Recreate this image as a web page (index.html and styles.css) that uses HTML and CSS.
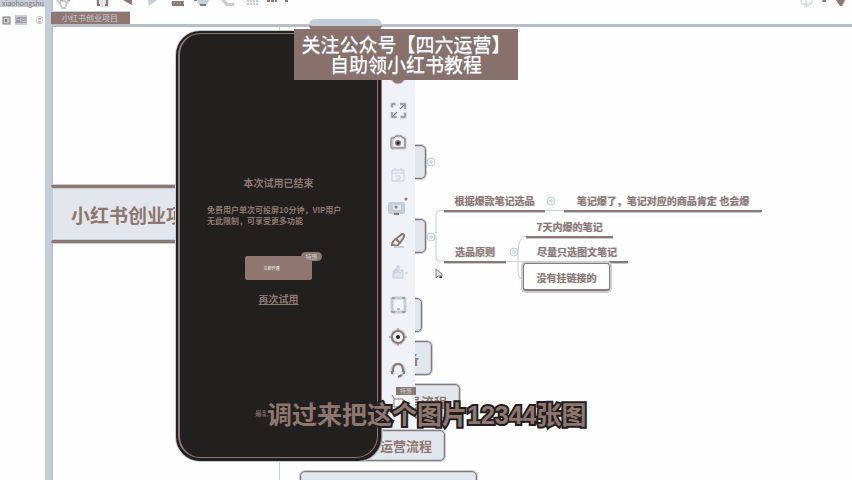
FILE: index.html
```html
<!DOCTYPE html>
<html lang="zh-CN">
<head>
<meta charset="utf-8">
<title>小红书创业项目</title>
<link rel="stylesheet" href="styles.css">
</head>
<body>
<div class="app">
  <aside class="sidebar">
    <div class="account">xiaohongshu</div>
    <div class="side-tools">
      <svg width="9" height="9" viewBox="0 0 9 9"><rect x="1" y="1" width="7" height="7" fill="#c3cedb" stroke="#8f776f"/><path d="M3 3h2v3H3z" fill="#8f776f"/></svg>
      <span>返回</span>
      <svg class="side-end" width="7" height="8" viewBox="0 0 7 8"><rect x=".5" y=".5" width="6" height="7" rx="2" fill="#fff" stroke="#c3cedb"/><path d="M2 3h3M2 6h3" stroke="#8f776f"/></svg>
    </div>
  </aside>
  <div class="divider"></div>
  <main class="workspace">
    <header class="topbar">
      <div class="tools">
        <button class="tool first" aria-label="主页"><svg viewBox="0 0 25 10"><path d="M6 0l2 3 4-3 4 3 3-3M9 3l2 5h3l2-5" fill="none" stroke="#c3cedb" stroke-width="2"/><path d="M9 0h3M16 0h3" stroke="#8f776f"/></svg></button>
        <button class="tool" aria-label="保存"><svg viewBox="0 0 25 10"><path d="M7 0v6h11V0" fill="#e1e7ed" stroke="#c3cedb"/><path d="M8 0v5h2M17 0v5h-2" fill="none" stroke="#8f776f" stroke-width="2"/></svg></button>
        <button class="tool" aria-label="撤销"><svg viewBox="0 0 25 10"><path d="M8 0h9v5l-4-2z" fill="#8f776f"/></svg></button>
        <button class="tool" aria-label="重做"><svg viewBox="0 0 25 10"><path d="M8 0h9l-4 3-4 3z" fill="#c3cedb"/></svg></button>
        <button class="tool" aria-label="主题"><svg viewBox="0 0 25 10"><path d="M7 1h12v5H7z" fill="#8f776f"/><path d="M6 3h14" stroke="#c3cedb" stroke-dasharray="1 2"/></svg></button>
        <button class="tool" aria-label="关系"><svg viewBox="0 0 25 10"><path d="M7 0h12l-2 5H9z" fill="#c3cedb"/><path d="M10 5h6M4 0h3" stroke="#8f776f" stroke-width="2"/></svg></button>
        <button class="tool" aria-label="概要"><svg viewBox="0 0 25 10"><path d="M6 0h4l3 3h6v3h-8z" fill="#c3cedb"/></svg></button>
        <button class="tool" aria-label="外框"><svg viewBox="0 0 25 10"><path d="M7 1h12M7 4h12" stroke="#c3cedb" stroke-width="2" stroke-dasharray="2 1"/></svg></button>
        <button class="tool" aria-label="更多"><svg viewBox="0 0 25 10"><path d="M2 1h10M20 1h3" stroke="#8f776f" stroke-width="2" stroke-dasharray="3 1"/></svg></button>
        <button class="tool push" aria-label="语音"><svg viewBox="0 0 25 10"><path d="M8 0v2q0 2 3 2h6q2 0 2-2V0M11 6h5M13 0v6" fill="none" stroke="#c3cedb" stroke-width="1"/></svg></button>
        <button class="tool last" aria-label="标记"><svg viewBox="0 0 34 10"><path d="M4 0h4v2H5z" fill="#8f776f"/><path d="M18 0h9l-3 6h-2z" fill="#8f776f"/></svg></button>
      </div>
      <div class="tabs"><a class="tab" href="#map">小红书创业项目</a></div>
    </header>

    <section class="map" id="map">
      <svg class="links" viewBox="0 0 852 480" width="852" height="480">
        <g fill="none" stroke="#c3cedb">
          <path d="M279.500 27v453M426 237h10M444 210.500h-4q-4 0-4 4V257q0 4 4 4h4M545 210.500h19M506 261.500h20M526 236.500h-2q-6 2-6 18v18q0 5 4 7"/>
          <g fill="#f3f6f9"><circle cx="431" cy="162" r="4"/><circle cx="431" cy="237" r="4"/><circle cx="551" cy="201" r="4"/><circle cx="514" cy="252" r="4"/></g>
          <path d="M429 162h4M431 160v4M429 237h4M431 235v4M549 201h4M551 199v4M512 252h4M514 250v4"/>
        </g>
      </svg>
      <div class="node root">小红书创业项目</div>
      <div class="node n1"></div>
      <div class="node n2"></div>
      <div class="node n3"></div>
      <div class="node n4">准备</div>
      <div class="node n5">起号流程</div>
      <div class="node n6">运营流程</div>
      <div class="node n7"></div>
      <div class="leaf l1">根据爆款笔记选品</div>
      <div class="leaf l2">笔记爆了，笔记对应的商品肯定 也会爆</div>
      <div class="leaf l3">选品原则</div>
      <div class="leaf l4">7天内爆的笔记</div>
      <div class="leaf l5">尽量只选图文笔记</div>
      <div class="leaf selected">没有挂链接的</div>
      <svg class="cursor" width="8" height="12" viewBox="0 0 8 12"><path d="M1 1v9l2-2h4V6z" fill="#e1e7ed" stroke="#8f776f"/><path d="M4 9l3-1v2H5z" fill="#22201f"/></svg>
    </section>
  </main>

  <div class="hint"></div>
  <section class="mirror">
    <div class="phone">
      <div class="screen">
        <h1>本次试用已结束</h1>
        <p>免费用户单次可投屏10分钟，VIP用户<br>无此限制，可享受更多功能</p>
        <div class="buy"><button class="vip">立即开通</button><span class="badge">特惠</span></div>
        <a class="retry" href="#retry">再次试用</a>
        <span class="foot">最新</span>
      </div>
    </div>
    <nav class="rail">
      <button aria-label="置顶"><svg viewBox="0 0 20 20"><circle cx="10" cy="10" r="7" fill="#8f776f" stroke="#c3cedb"/></svg></button>
      <button aria-label="全屏"><svg viewBox="0 0 20 20"><path d="M4 8V4h4M12 4h5v5M17 12v5h-5M8 17H4v-5M12 9l4-4M5 16l4-4" fill="none" stroke="#c3cedb" stroke-width="3"/><path d="M4 7V4h3M12 4h5v5M17 13v4h-4M9 17H4v-5M12 9l4-4M5 16l4-4" fill="none" stroke="#8f776f" stroke-width="1"/></svg></button>
      <button aria-label="截图"><svg viewBox="0 0 20 20"><path d="M4 6h2l2-2h5l2 2h2v10H4z" fill="#f3f6f9" stroke="#c3cedb" stroke-width="3" stroke-linejoin="round"/><path d="M4 6h2l2-2h5l2 2h1q1 0 1 1v8q0 1-1 1H4q-1 0-1-1V7q0-1 1-1z" fill="none" stroke="#8f776f"/><circle cx="10" cy="11" r="3" fill="#8f776f"/><circle cx="10" cy="11" r="1.500" fill="#22201f"/></svg></button>
      <button aria-label="录屏"><svg viewBox="0 0 20 20"><path d="M4 5h12v11H4zM4 8h12M7 3v3M13 3v3M8 11h4v3H8" fill="none" stroke="#c3cedb"/></svg></button>
      <button aria-label="投屏"><svg viewBox="0 0 20 20"><rect x="0" y="5" width="17" height="12" rx="2" fill="#c3cedb"/><path d="M5 8h8v5H5z" fill="#e1e7ed"/><circle cx="8" cy="10" r="1.500" fill="#8f776f"/><circle cx="18" cy="2" r="1.500" fill="#8f776f"/><path d="M6 17h5" stroke="#8f776f" stroke-width="2"/></svg></button>
      <button aria-label="画笔"><svg viewBox="0 0 20 20"><path d="M4 15q0-4 5-7l5-4q3 0 2 3l-4 6q-3 4-6 2z" fill="#e1e7ed" stroke="#8f776f" stroke-width="2"/><path d="M8 9l4 4" stroke="#8f776f" stroke-width="2"/><path d="M6 17h10" stroke="#c3cedb" stroke-width="2"/></svg></button>
      <button aria-label="触控"><svg viewBox="0 0 20 20"><path d="M5 16V9h2v3V7h2v4V4h2v7h2V8h2v8zM17 11h3" fill="#e1e7ed" stroke="#c3cedb"/></svg></button>
      <button aria-label="设备"><svg viewBox="0 0 20 20"><rect x="4" y="3" width="13" height="14" rx="1" fill="#f3f6f9" stroke="#c3cedb" stroke-width="3"/><path d="M4 3h3M14 3h3M4 16v1h3M17 16v1h-3M9 14h3" fill="none" stroke="#8f776f"/></svg></button>
      <button aria-label="设置"><svg viewBox="0 0 20 20"><circle cx="10" cy="10" r="7" fill="#f3f6f9" stroke="#c3cedb" stroke-width="2"/><circle cx="10" cy="10" r="6" fill="none" stroke="#8f776f" stroke-width="2"/><path d="M9 2h2M9 18h2M2 9v2M18 9v2" stroke="#8f776f"/><circle cx="10" cy="10" r="2" fill="#22201f"/></svg></button>
      <button aria-label="客服"><svg viewBox="0 0 20 20"><path d="M4 12V9q1-5 6-5t6 5v3M5 11v4M15 11v4M14 15l-3 2" fill="none" stroke="#c3cedb" stroke-width="3"/><path d="M5 12V9q1-5 5-5t5 5v3M4 11v3M16 11v3M14 15l-4 2" fill="none" stroke="#8f776f" stroke-width="2"/></svg></button>
      <button class="shop" aria-label="会员"><svg viewBox="0 0 20 20"><path d="M4 3l2 3v9h9V7H6" fill="#fff" stroke="#8f776f"/></svg><span class="mark">特惠</span></button>
    </nav>
  </section>

  <div class="banner">关注公众号【四六运营】<br>自助领小红书教程</div>
  <div class="subtitle">调过来把这个图片12344张图</div>
</div>
</body>
</html>
```
FILE: styles.css
```css
:root {
  --brown: #8f776f;
  --blue: #c3cedb;
  --pale: #e1e7ed;
  --dark: #22201f;
}
* { box-sizing: border-box; }
body {
  margin: 0;
  background: #fefefe;
  color: var(--brown);
  font-family: "Noto Sans CJK SC", "Liberation Sans", sans-serif;
}
button { padding: 0; border: 0; background: none; font: inherit; color: inherit; }
.app { position: relative; display: flex; height: 100vh; overflow: hidden; }

.sidebar { width: 45px; flex: none; }
.account {
  height: 7px;
  padding-left: 2px;
  background: var(--blue);
  font-size: 7px;
  line-height: 6px;
}
.side-tools { display: flex; align-items: center; gap: 4px; padding: 8px 2px; font-size: 6px; line-height: 10px; }
.side-tools span { background: var(--blue); }
.side-end { margin-left: auto; }
.divider { width: 8px; flex: none; background: var(--blue); border-right: 2px solid #bcc3cc; }

.workspace { flex: 1; min-width: 0; }
.topbar { display: flex; flex-direction: column; height: 27px; border-bottom: 3px solid #b8bfc8; }
.tools { display: flex; height: 13px; }
.tool { width: 25px; height: 10px; flex: none; }
.tool svg { display: block; width: 100%; height: 10px; }
.tool.first { margin: 0 14px 0 -2px; }
.tool.push { margin-left: auto; }
.tool.last { width: 34px; }
.tabs { display: flex; margin-left: -2px; }
.tab {
  height: 13px;
  padding: 0 12px 0 11px;
  background: var(--brown);
  border-top: 1px solid var(--blue);
  color: var(--blue);
  font-size: 8px;
  line-height: 11px;
  text-decoration: none;
}

.links { position: absolute; left: 0; top: 0; }
.node {
  position: absolute;
  display: flex;
  align-items: center;
  justify-content: flex-end;
  left: 300px;
  height: 34px;
  padding-right: 12px;
  background: var(--pale);
  border: 1px solid var(--brown);
  border-radius: 5px;
  box-shadow: inset 0 0 0 1px var(--blue), 0 0 0 1px var(--blue);
  font-size: 13px;
  font-weight: 700;
  white-space: nowrap;
}
.root {
  left: 51px;
  top: 185px;
  width: 180px;
  height: 58px;
  padding-left: 19px;
  justify-content: flex-start;
  border-width: 3px 1px;
  border-color: var(--brown) var(--blue);
  border-radius: 0;
  font-size: 19px;
}
.n1 { top: 145px; width: 126px; }
.n2 { top: 219px; width: 126px; }
.n3 { top: 298px; width: 122px; }
.n4 { top: 341px; width: 132px; }
.n5 { top: 384px; width: 160px; }
.n6 { top: 430px; width: 145px; height: 31px; }
.n7 { top: 471px; width: 177px; }

.leaf {
  position: absolute;
  height: 20px;
  border-bottom: 2px solid var(--brown);
  box-shadow: 0 1px 0 var(--blue);
  font-size: 10px;
  line-height: 18px;
  font-weight: 700;
  text-align: center;
  white-space: nowrap;
  text-shadow: 0 0 1px var(--blue), 1px 0 1px var(--blue);
}
.l1 { left: 444px; top: 192px; width: 101px; }
.l2 { left: 564px; top: 192px; width: 198px; }
.l3 { left: 444px; top: 243px; width: 62px; }
.l4 { left: 526px; top: 218px; width: 87px; }
.l5 { left: 526px; top: 243px; width: 102px; }
.selected {
  left: 523px;
  top: 263px;
  width: 87px;
  height: 28px;
  border: 1px solid var(--brown);
  border-bottom-width: 2px;
  border-radius: 3px;
  box-shadow: 0 0 0 2px var(--blue);
  line-height: 28px;
}
.cursor { position: absolute; left: 435px; top: 268px; }

.hint { position: absolute; left: 309px; top: 19px; width: 73px; height: 12px; border-radius: 6px; background: var(--blue); border-bottom: 5px solid var(--brown); }

.mirror { position: absolute; left: 176px; top: 31px; display: flex; }
.phone {
  width: 206px;
  height: 430px;
  padding: 2px 3px 3px 2px;
  background: var(--dark);
  border-right: 1px solid var(--brown);
  border-radius: 24px;
  box-shadow: 0 0 0 1px var(--blue);
}
.screen {
  display: flex;
  flex-direction: column;
  align-items: center;
  height: 100%;
  border: solid var(--brown);
  border-width: 1px 1px 1px 2px;
  border-radius: 22px;
}
.screen h1 { margin: 142px 0 0; font-size: 10px; line-height: 14px; font-weight: 700; }
.screen p { align-self: flex-start; margin: 14px 0 0 27px; font-size: 8px; line-height: 11px; font-weight: 700; }
.buy { position: relative; margin-top: 30px; }
.vip {
  display: block;
  width: 67px;
  height: 24px;
  padding-right: 14px;
  border-radius: 2px;
  background: var(--brown);
  color: #fefefe;
  font-size: 4px;
}
.badge {
  position: absolute;
  left: 56px;
  top: -4px;
  width: 21px;
  border-radius: 5px;
  background: var(--brown);
  color: var(--blue);
  font-size: 6px;
  line-height: 9px;
  text-align: center;
}
.retry { margin-top: 12px; color: var(--brown); font-size: 10px; line-height: 14px; font-weight: 700; text-decoration: underline; }
.foot { align-self: flex-start; margin: 101px 0 0 75px; font-size: 7px; line-height: 12px; }

.rail {
  display: flex;
  flex-direction: column;
  justify-content: space-between;
  width: 33px;
  margin: 36px 0 32px;
  padding: 0 0 17px 6px;
  background: #eff2f6;
}
.rail button { position: relative; width: 20px; height: 20px; }
.rail svg { display: block; width: 20px; height: 20px; }
.mark { position: absolute; left: 8px; top: -5px; width: 20px; background: var(--brown); color: var(--blue); font-size: 6px; line-height: 8px; }

.banner {
  position: absolute;
  left: 294px;
  top: 29px;
  width: 224px;
  height: 51px;
  padding-top: 5px;
  background: #88716a;
  color: #fefefe;
  font-size: 19px;
  line-height: 20px;
  text-align: center;
  text-shadow: 0 1px 0 var(--blue);
  white-space: nowrap;
}
.subtitle {
  position: absolute;
  left: 267px;
  top: 398px;
  font-family: "Liberation Sans", "Noto Sans CJK SC", sans-serif;
  font-size: 25px;
  line-height: 34px;
  font-weight: 700;
  white-space: nowrap;
  -webkit-text-stroke: 4px var(--dark);
  paint-order: stroke fill;
}
```
